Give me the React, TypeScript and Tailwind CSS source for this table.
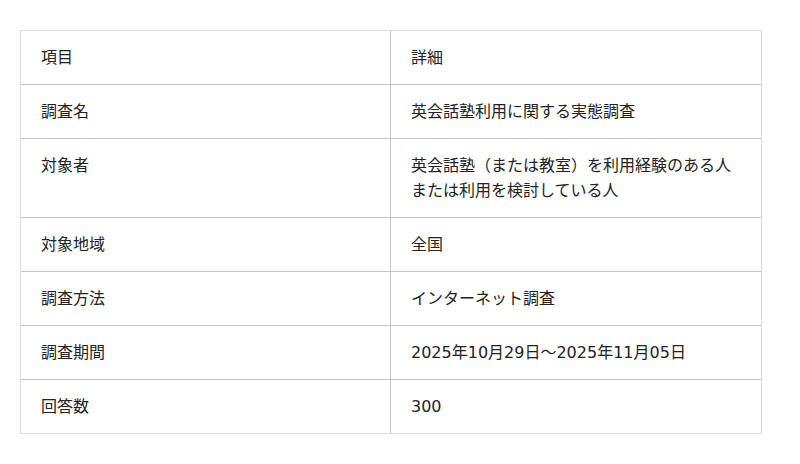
import React from "react"

const rows: [string, string[]][] = [
    ["項目", ["詳細"]],
    ["調査名", ["英会話塾利用に関する実態調査"]],
    ["対象者", ["英会話塾（または教室）を利用経験のある人", "または利用を検討している人"]],
    ["対象地域", ["全国"]],
    ["調査方法", ["インターネット調査"]],
    ["調査期間", ["2025年10月29日～2025年11月05日"]],
    ["回答数", ["300"]],
]

export default function App() {
    return (
        <div
            className="w-[800px] h-[464px] bg-white pt-[30px] px-[20px] text-[16px] leading-[25px] text-[#222]"
            style={{ fontFamily: '"DejaVu Sans", "Noto Sans CJK JP", sans-serif' }}
        >
            <div className="w-[742px] border border-[#dcdcdc]">
                {rows.map(([label, detail], i) => (
                    <div
                        key={label}
                        className={`grid grid-cols-[370px_1fr] ${i < rows.length - 1 ? "border-b border-[#c4c4c4]" : ""}`}
                    >
                        <div className="border-r border-[#c4c4c4] px-[20px] py-[14px]">{label}</div>
                        <div className="px-[20px] py-[14px]">
                            {detail.map((line) => (
                                <div key={line}>{line}</div>
                            ))}
                        </div>
                    </div>
                ))}
            </div>
        </div>
    )
}
